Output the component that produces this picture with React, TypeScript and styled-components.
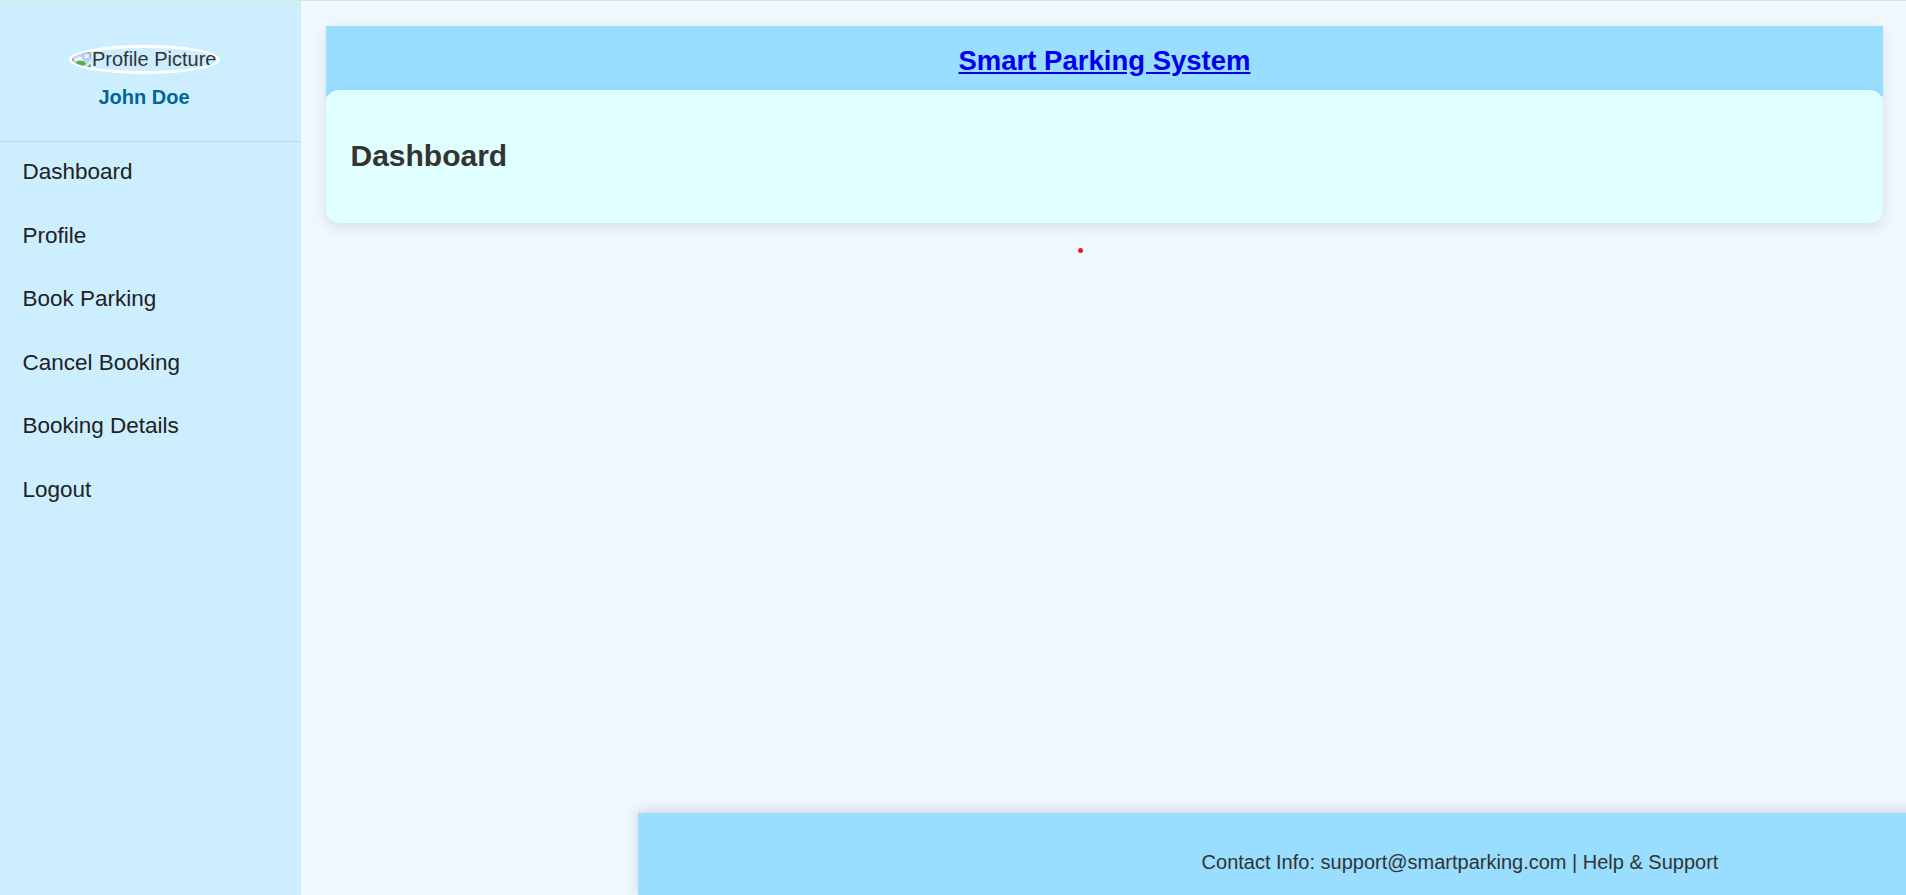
import React from "react";
import styled, { createGlobalStyle } from "styled-components";

const GlobalStyle = createGlobalStyle`
  * { box-sizing: border-box; }
  body {
    margin: 0;
    background: #f0f8ff;
    color: #333;
    font-family: Arial, "Liberation Sans", sans-serif;
    font-size: 20px;
    overflow: hidden;
  }
`;

const Page = styled.div`
  display: flex;
  height: 100vh;
  overflow: hidden;
  border-top: 1px solid #dce5d8;
`;

const Sidebar = styled.aside`
  flex: 0 0 301px;
  background: #cceeff;
`;

const Profile = styled.div`
  display: flex;
  flex-direction: column;
  align-items: center;
  height: 141px;
  padding: 44px 12px 0 0;
  border-bottom: 1px solid #aaddff;
`;

const Avatar = styled.div`
  display: flex;
  width: 151px;
  height: 29px;
  border: 3px solid #fff;
  border-radius: 50%;
  overflow: hidden;
  line-height: 23px;
  white-space: nowrap;
`;

const BrokenImage = styled.svg`
  flex: 0 0 20px;
  width: 20px;
  height: 20px;
  margin-top: 3px;
`;

const UserName = styled.div`
  margin: 12px 1px 0 0;
  color: #006699;
  font-weight: bold;
  line-height: 23px;
`;

const Menu = styled.nav`
  display: flex;
  flex-direction: column;
`;

const MenuLink = styled.a`
  height: 63.6px;
  padding: 17px 22.5px;
  color: #222;
  font-size: 22.5px;
  line-height: 26px;
  text-decoration: none;
`;

const Main = styled.main`
  flex: 1;
  min-width: 0;
  display: flex;
  flex-direction: column;
`;

const Header = styled.header`
  height: 70px;
  margin: 25px 23px 0 25px;
  padding-top: 19px;
  background: #99ddff;
  box-shadow: 0 5px 12.5px rgba(0, 0, 0, 0.1);
  text-align: center;
`;

const Brand = styled.a`
  display: block;
  color: #0000ee;
  font-size: 27.5px;
  font-weight: bold;
  line-height: 31px;
  text-decoration: underline;
`;

const Card = styled.section`
  height: 133.5px;
  margin: -6.5px 23px 0 25px;
  padding: 49.5px 24.5px 0;
  border-radius: 12.5px;
  background: #e0ffff;
  box-shadow: 0 5px 12.5px rgba(0, 0, 0, 0.1);
`;

const Title = styled.h2`
  margin: 0;
  font-size: 30px;
  line-height: 34px;
`;

const Marker = styled.span`
  width: 5px;
  height: 5px;
  margin: 25px 0 0 777px;
  border-radius: 50%;
  background: #ed1c24;
`;

const Footer = styled.footer`
  width: 1644px;
  height: 82px;
  margin: auto 0 0 337px;
  padding-top: 38px;
  background: #99ddff;
  box-shadow: 0 -2.5px 12.5px rgba(0, 0, 0, 0.15);
  color: #333;
  font-size: 20px;
  line-height: 23px;
  text-align: center;
`;

const menuItems = [
  "Dashboard",
  "Profile",
  "Book Parking",
  "Cancel Booking",
  "Booking Details",
  "Logout",
];

export default function App() {
  return (
    <>
      <GlobalStyle />
      <Page>
        <Sidebar>
          <Profile>
            <Avatar>
              <BrokenImage viewBox="0 0 16 16" aria-hidden="true">
                <path d="M0 1h10.500v4.500H15V7L7 14.500H0z" fill="#bccff2" />
                <path d="M2 7c0-1.600 1.500-2.200 2.500-1.500C5.300 3.600 8 4 8 6.200c1.300.2 1.200 1.800.2 1.800H3C2.300 8 2 7.600 2 7z" fill="#eef4fd" />
                <path d="M1 12c1.500-3 3.700-4.500 6-4.300 2 .1 3.500 1.300 4.200 2.600L7 13.500H1z" fill="#58b03c" />
                <path d="M10 14l4.500-3.500V14z" fill="#58b03c" />
                <path d="M.5 14V1.500H10M10.500 1.500H14.500V6M14.500 10.500V14" fill="none" stroke="#9a9a9a" strokeWidth="1" />
                <path d="M10.500 2.200l3.400 3.300h-3.400z" fill="#f2f7fd" />
              </BrokenImage>
              <span>Profile Picture</span>
            </Avatar>
            <UserName>John Doe</UserName>
          </Profile>
          <Menu>
            {menuItems.map((item) => (
              <MenuLink key={item}>{item}</MenuLink>
            ))}
          </Menu>
        </Sidebar>
        <Main>
          <Header>
            <Brand href="#">Smart Parking System</Brand>
          </Header>
          <Card>
            <Title>Dashboard</Title>
          </Card>
          <Marker />
          <Footer>Contact Info: support@smartparking.com | Help &amp; Support</Footer>
        </Main>
      </Page>
    </>
  );
}
